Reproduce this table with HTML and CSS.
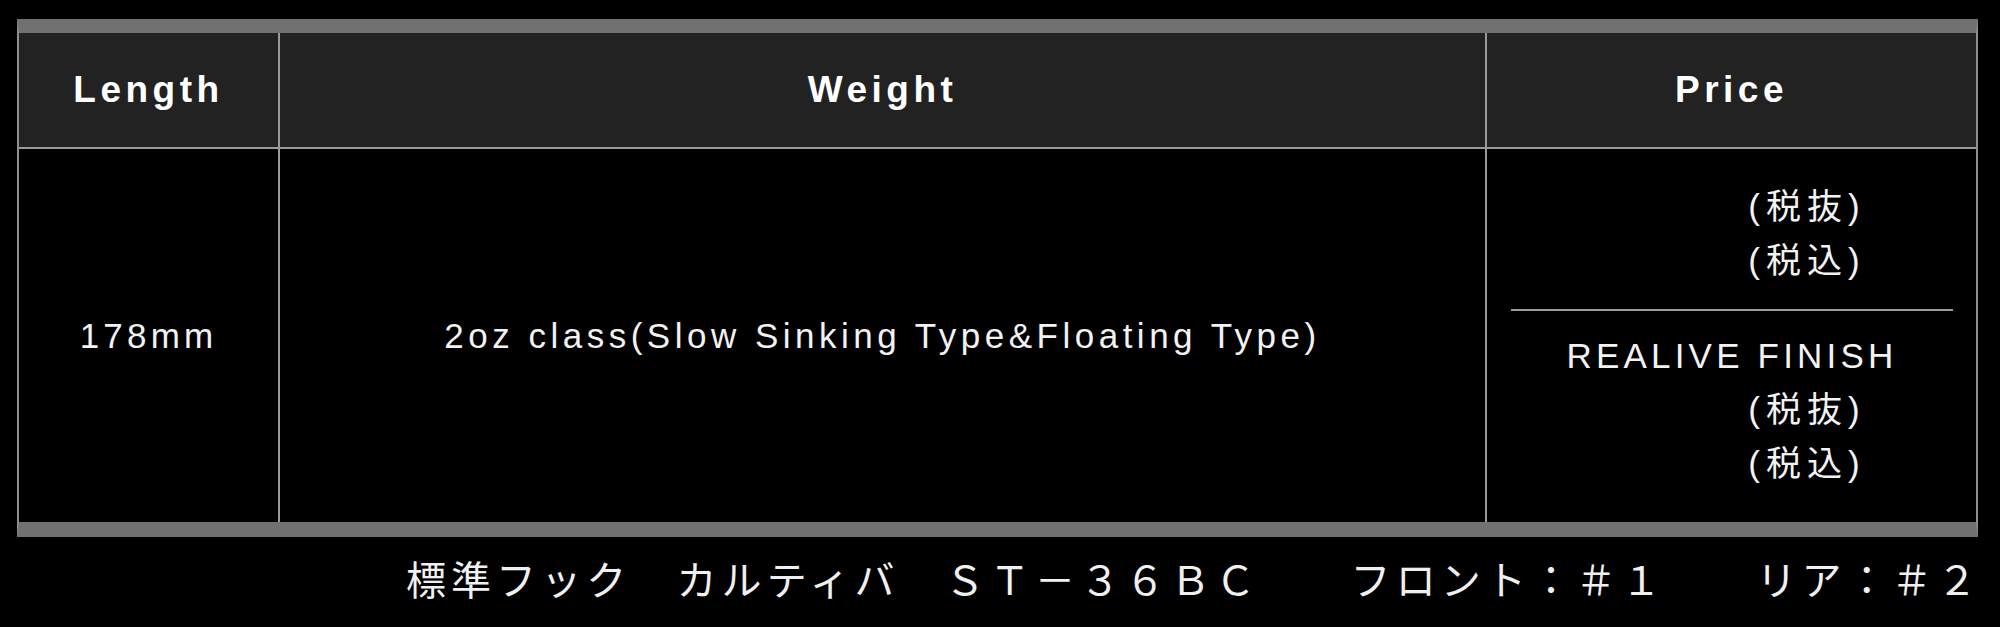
FILE: index.html
```html
<!DOCTYPE html>
<html lang="ja">
<head>
<meta charset="utf-8">
<title>Spec</title>
<link rel="stylesheet" href="styles.css">
</head>
<body>
<div class="page">
  <table class="spec">
    <thead>
      <tr>
        <th class="col-length">Length</th>
        <th class="col-weight">Weight</th>
        <th class="col-price">Price</th>
      </tr>
    </thead>
    <tbody>
      <tr>
        <td class="cell-length">178mm</td>
        <td class="cell-weight">2oz class(Slow Sinking Type&amp;Floating Type)</td>
        <td class="cell-price">
          <div class="price-box">
            <div class="price-group">
              <div class="price-line tax"><span class="price-blank"></span>(税抜)</div>
              <div class="price-line tax"><span class="price-blank"></span>(税込)</div>
            </div>
            <div class="price-sep"></div>
            <div class="price-group">
              <div class="price-line">REALIVE FINISH</div>
              <div class="price-line tax"><span class="price-blank"></span>(税抜)</div>
              <div class="price-line tax"><span class="price-blank"></span>(税込)</div>
            </div>
          </div>
        </td>
      </tr>
    </tbody>
  </table>
  <p class="hook-note">標準フック　カルティバ　ＳＴ－３６ＢＣ　　フロント：＃１　　リア：＃２</p>
</div>
</body>
</html>
```

FILE: styles.css
```css
html, body {
  margin: 0;
  padding: 0;
  background: #000;
}

.page {
  width: 2000px;
  padding-top: 19px;
  color: #f2f2f2;
  font-family: "Liberation Sans", "Noto Sans CJK JP", sans-serif;
}

.spec {
  box-sizing: border-box;
  margin-left: 17px;
  width: 1961px;
  table-layout: fixed;
  border-collapse: separate;
  border-spacing: 0;
  border-top: 14px solid #717171;
  border-bottom: 15px solid #717171;
  border-left: 2px solid #8e8e8e;
  border-right: 2px solid #8e8e8e;
}

.spec th,
.spec td {
  box-sizing: border-box;
  padding: 0;
  text-align: center;
  vertical-align: middle;
}

.spec th {
  height: 116px;
  background: #222222;
  border-bottom: 2px solid #9a9a9a;
  font-size: 37px;
  font-weight: 700;
  letter-spacing: 4.5px;
  color: #ffffff;
}

.col-length { width: 261px; }
.col-weight { width: 1207px; }

.col-length,
.col-weight,
.cell-length,
.cell-weight {
  border-right: 2px solid #9a9a9a;
}

.spec td {
  height: 373px;
  background: #000;
  font-size: 35px;
  letter-spacing: 4.2px;
}

.spec .cell-weight {
  letter-spacing: 4.5px;
}

.spec .cell-price {
  padding: 0 23px 0 24px;
}

.price-box {
  display: flex;
  flex-direction: column;
}

.price-line {
  line-height: 54px;
  white-space: nowrap;
}

.price-line.tax {
  letter-spacing: 6px;
}

.price-blank {
  display: inline-block;
  width: 150px;
}

.price-sep {
  height: 2px;
  background: #9a9a9a;
  margin: 21px 0 18px;
}

.hook-note {
  margin: 0;
  padding-right: 18px;
  text-align: right;
  font-family: "Noto Sans CJK JP", sans-serif;
  font-size: 40px;
  line-height: 82px;
  letter-spacing: 5.1px;
  color: #f0f0f0;
}
```
